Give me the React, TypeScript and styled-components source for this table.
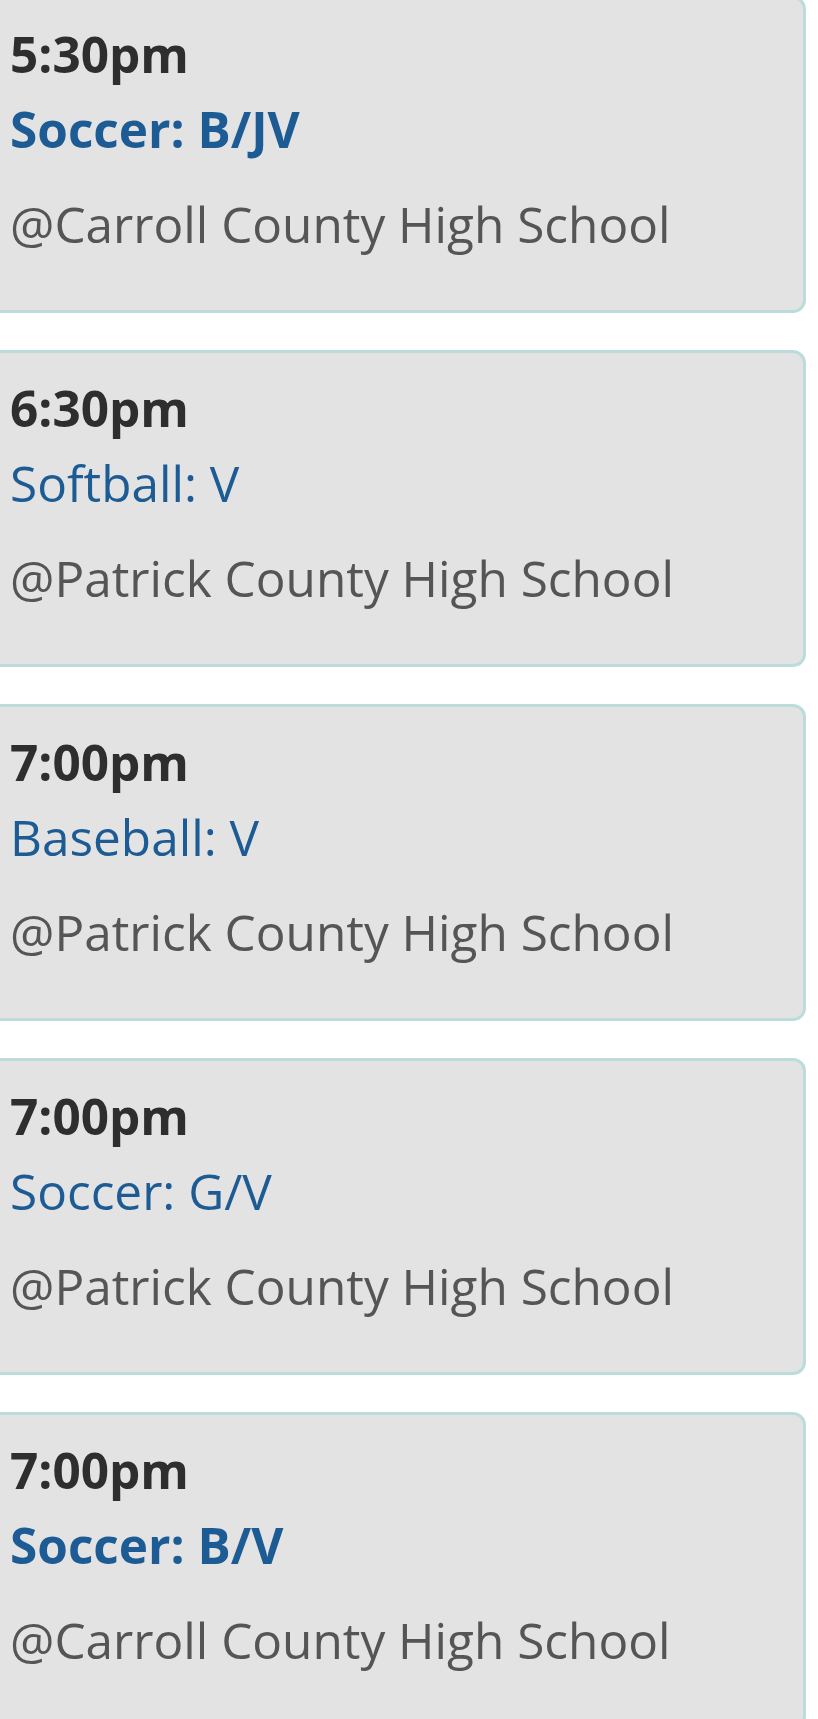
import styled, { createGlobalStyle } from 'styled-components';

const events = [
  { time: '5:30pm', sport: 'Soccer: B/JV', place: '@Carroll County High School', home: true },
  { time: '6:30pm', sport: 'Softball: V', place: '@Patrick County High School', home: false },
  { time: '7:00pm', sport: 'Baseball: V', place: '@Patrick County High School', home: false },
  { time: '7:00pm', sport: 'Soccer: G/V', place: '@Patrick County High School', home: false },
  { time: '7:00pm', sport: 'Soccer: B/V', place: '@Carroll County High School', home: true },
];

const GlobalStyle = createGlobalStyle`
  html, body {
    margin: 0;
    padding: 0;
    background: #ffffff;
    overflow: hidden;
  }
  body {
    font-family: 'Open Sans', 'Noto Sans', sans-serif;
  }
`;

export default function App() {
  return (
    <>
      <GlobalStyle />
      <Schedule>
        {events.map((event, i) => (
          <EventCard key={i}>
            <Time>{event.time}</Time>
            <Sport $home={event.home}>{event.sport}</Sport>
            <Place>{event.place}</Place>
          </EventCard>
        ))}
      </Schedule>
    </>
  );
}

const Schedule = styled.div`
  display: flex;
  flex-direction: column;
  gap: 37px;
  margin: -4px 12px 0 -20px;
`;

const EventCard = styled.div`
  display: flex;
  flex-direction: column;
  padding: 18px 20px 48px 27px;
  background-color: #e3e3e3;
  border: 3px solid #bcdcdc;
  border-radius: 13px;
`;

const Time = styled.div`
  font-size: 49.5px;
  line-height: 75px;
  font-weight: 700;
  color: #2e2e2e;
`;

const Sport = styled.div<{ $home: boolean }>`
  font-size: 49.5px;
  line-height: 75px;
  font-weight: ${(p) => (p.$home ? 700 : 400)};
  color: #1d5b94;
`;

const Place = styled.div`
  margin-top: 20px;
  font-size: 49.5px;
  line-height: 75px;
  color: #555555;
`;
